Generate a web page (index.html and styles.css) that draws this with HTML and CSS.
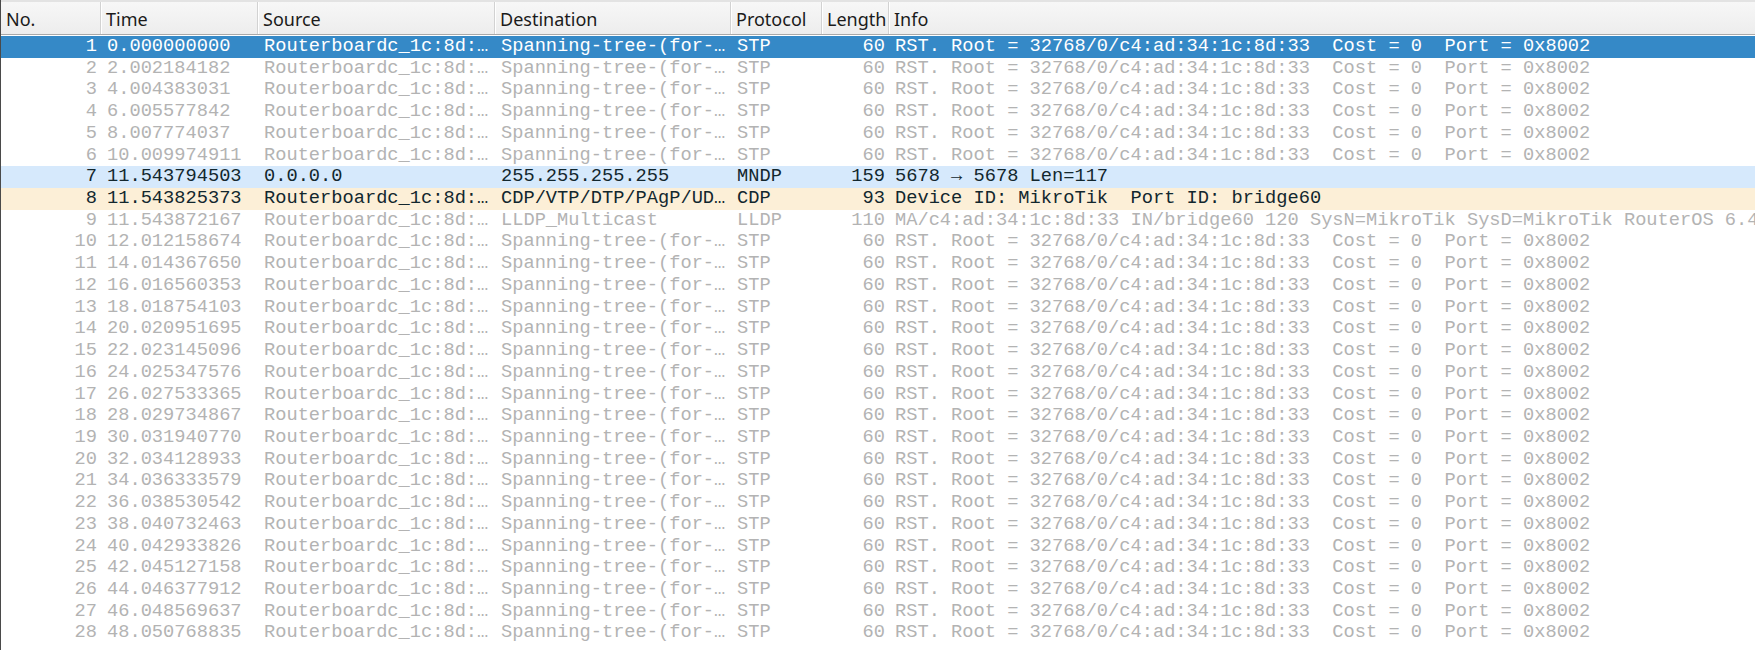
FILE: index.html
```html
<!DOCTYPE html>
<html>
<head>
<meta charset="utf-8">
<link rel="stylesheet" href="styles.css">
</head>
<body>
<div class="list">
  <div class="head">
    <div class="hc">No.</div>
    <div class="hc">Time</div>
    <div class="hc">Source</div>
    <div class="hc">Destination</div>
    <div class="hc">Protocol</div>
    <div class="hc">Length</div>
    <div class="hc last">Info</div>
  </div>
  <div class="body">
    <div class="row sel"><span class="no">1</span><span>0.000000000</span><span>Routerboardc_1c:8d:…</span><span>Spanning-tree-(for-…</span><span>STP</span><span class="len">60</span><span>RST. Root = 32768/0/c4:ad:34:1c:8d:33  Cost = 0  Port = 0x8002</span></div>
    <div class="row dim"><span class="no">2</span><span>2.002184182</span><span>Routerboardc_1c:8d:…</span><span>Spanning-tree-(for-…</span><span>STP</span><span class="len">60</span><span>RST. Root = 32768/0/c4:ad:34:1c:8d:33  Cost = 0  Port = 0x8002</span></div>
    <div class="row dim"><span class="no">3</span><span>4.004383031</span><span>Routerboardc_1c:8d:…</span><span>Spanning-tree-(for-…</span><span>STP</span><span class="len">60</span><span>RST. Root = 32768/0/c4:ad:34:1c:8d:33  Cost = 0  Port = 0x8002</span></div>
    <div class="row dim"><span class="no">4</span><span>6.005577842</span><span>Routerboardc_1c:8d:…</span><span>Spanning-tree-(for-…</span><span>STP</span><span class="len">60</span><span>RST. Root = 32768/0/c4:ad:34:1c:8d:33  Cost = 0  Port = 0x8002</span></div>
    <div class="row dim"><span class="no">5</span><span>8.007774037</span><span>Routerboardc_1c:8d:…</span><span>Spanning-tree-(for-…</span><span>STP</span><span class="len">60</span><span>RST. Root = 32768/0/c4:ad:34:1c:8d:33  Cost = 0  Port = 0x8002</span></div>
    <div class="row dim"><span class="no">6</span><span>10.009974911</span><span>Routerboardc_1c:8d:…</span><span>Spanning-tree-(for-…</span><span>STP</span><span class="len">60</span><span>RST. Root = 32768/0/c4:ad:34:1c:8d:33  Cost = 0  Port = 0x8002</span></div>
    <div class="row udp"><span class="no">7</span><span>11.543794503</span><span>0.0.0.0</span><span>255.255.255.255</span><span>MNDP</span><span class="len">159</span><span>5678 → 5678 Len=117</span></div>
    <div class="row cdp"><span class="no">8</span><span>11.543825373</span><span>Routerboardc_1c:8d:…</span><span>CDP/VTP/DTP/PAgP/UD…</span><span>CDP</span><span class="len">93</span><span>Device ID: MikroTik  Port ID: bridge60</span></div>
    <div class="row dim"><span class="no">9</span><span>11.543872167</span><span>Routerboardc_1c:8d:…</span><span>LLDP_Multicast</span><span>LLDP</span><span class="len">110</span><span>MA/c4:ad:34:1c:8d:33 IN/bridge60 120 SysN=MikroTik SysD=MikroTik RouterOS 6.48.6 (long-term) RB951Ui-2HnD</span></div>
    <div class="row dim"><span class="no">10</span><span>12.012158674</span><span>Routerboardc_1c:8d:…</span><span>Spanning-tree-(for-…</span><span>STP</span><span class="len">60</span><span>RST. Root = 32768/0/c4:ad:34:1c:8d:33  Cost = 0  Port = 0x8002</span></div>
    <div class="row dim"><span class="no">11</span><span>14.014367650</span><span>Routerboardc_1c:8d:…</span><span>Spanning-tree-(for-…</span><span>STP</span><span class="len">60</span><span>RST. Root = 32768/0/c4:ad:34:1c:8d:33  Cost = 0  Port = 0x8002</span></div>
    <div class="row dim"><span class="no">12</span><span>16.016560353</span><span>Routerboardc_1c:8d:…</span><span>Spanning-tree-(for-…</span><span>STP</span><span class="len">60</span><span>RST. Root = 32768/0/c4:ad:34:1c:8d:33  Cost = 0  Port = 0x8002</span></div>
    <div class="row dim"><span class="no">13</span><span>18.018754103</span><span>Routerboardc_1c:8d:…</span><span>Spanning-tree-(for-…</span><span>STP</span><span class="len">60</span><span>RST. Root = 32768/0/c4:ad:34:1c:8d:33  Cost = 0  Port = 0x8002</span></div>
    <div class="row dim"><span class="no">14</span><span>20.020951695</span><span>Routerboardc_1c:8d:…</span><span>Spanning-tree-(for-…</span><span>STP</span><span class="len">60</span><span>RST. Root = 32768/0/c4:ad:34:1c:8d:33  Cost = 0  Port = 0x8002</span></div>
    <div class="row dim"><span class="no">15</span><span>22.023145096</span><span>Routerboardc_1c:8d:…</span><span>Spanning-tree-(for-…</span><span>STP</span><span class="len">60</span><span>RST. Root = 32768/0/c4:ad:34:1c:8d:33  Cost = 0  Port = 0x8002</span></div>
    <div class="row dim"><span class="no">16</span><span>24.025347576</span><span>Routerboardc_1c:8d:…</span><span>Spanning-tree-(for-…</span><span>STP</span><span class="len">60</span><span>RST. Root = 32768/0/c4:ad:34:1c:8d:33  Cost = 0  Port = 0x8002</span></div>
    <div class="row dim"><span class="no">17</span><span>26.027533365</span><span>Routerboardc_1c:8d:…</span><span>Spanning-tree-(for-…</span><span>STP</span><span class="len">60</span><span>RST. Root = 32768/0/c4:ad:34:1c:8d:33  Cost = 0  Port = 0x8002</span></div>
    <div class="row dim"><span class="no">18</span><span>28.029734867</span><span>Routerboardc_1c:8d:…</span><span>Spanning-tree-(for-…</span><span>STP</span><span class="len">60</span><span>RST. Root = 32768/0/c4:ad:34:1c:8d:33  Cost = 0  Port = 0x8002</span></div>
    <div class="row dim"><span class="no">19</span><span>30.031940770</span><span>Routerboardc_1c:8d:…</span><span>Spanning-tree-(for-…</span><span>STP</span><span class="len">60</span><span>RST. Root = 32768/0/c4:ad:34:1c:8d:33  Cost = 0  Port = 0x8002</span></div>
    <div class="row dim"><span class="no">20</span><span>32.034128933</span><span>Routerboardc_1c:8d:…</span><span>Spanning-tree-(for-…</span><span>STP</span><span class="len">60</span><span>RST. Root = 32768/0/c4:ad:34:1c:8d:33  Cost = 0  Port = 0x8002</span></div>
    <div class="row dim"><span class="no">21</span><span>34.036333579</span><span>Routerboardc_1c:8d:…</span><span>Spanning-tree-(for-…</span><span>STP</span><span class="len">60</span><span>RST. Root = 32768/0/c4:ad:34:1c:8d:33  Cost = 0  Port = 0x8002</span></div>
    <div class="row dim"><span class="no">22</span><span>36.038530542</span><span>Routerboardc_1c:8d:…</span><span>Spanning-tree-(for-…</span><span>STP</span><span class="len">60</span><span>RST. Root = 32768/0/c4:ad:34:1c:8d:33  Cost = 0  Port = 0x8002</span></div>
    <div class="row dim"><span class="no">23</span><span>38.040732463</span><span>Routerboardc_1c:8d:…</span><span>Spanning-tree-(for-…</span><span>STP</span><span class="len">60</span><span>RST. Root = 32768/0/c4:ad:34:1c:8d:33  Cost = 0  Port = 0x8002</span></div>
    <div class="row dim"><span class="no">24</span><span>40.042933826</span><span>Routerboardc_1c:8d:…</span><span>Spanning-tree-(for-…</span><span>STP</span><span class="len">60</span><span>RST. Root = 32768/0/c4:ad:34:1c:8d:33  Cost = 0  Port = 0x8002</span></div>
    <div class="row dim"><span class="no">25</span><span>42.045127158</span><span>Routerboardc_1c:8d:…</span><span>Spanning-tree-(for-…</span><span>STP</span><span class="len">60</span><span>RST. Root = 32768/0/c4:ad:34:1c:8d:33  Cost = 0  Port = 0x8002</span></div>
    <div class="row dim"><span class="no">26</span><span>44.046377912</span><span>Routerboardc_1c:8d:…</span><span>Spanning-tree-(for-…</span><span>STP</span><span class="len">60</span><span>RST. Root = 32768/0/c4:ad:34:1c:8d:33  Cost = 0  Port = 0x8002</span></div>
    <div class="row dim"><span class="no">27</span><span>46.048569637</span><span>Routerboardc_1c:8d:…</span><span>Spanning-tree-(for-…</span><span>STP</span><span class="len">60</span><span>RST. Root = 32768/0/c4:ad:34:1c:8d:33  Cost = 0  Port = 0x8002</span></div>
    <div class="row dim"><span class="no">28</span><span>48.050768835</span><span>Routerboardc_1c:8d:…</span><span>Spanning-tree-(for-…</span><span>STP</span><span class="len">60</span><span>RST. Root = 32768/0/c4:ad:34:1c:8d:33  Cost = 0  Port = 0x8002</span></div>
  </div>
</div>
</body>
</html>
```
FILE: styles.css
```css
html, body {
  margin: 0;
  padding: 0;
  background: #ffffff;
  overflow: hidden;
}

.list {
  width: 1755px;
  height: 650px;
  overflow: hidden;
  border-left: 1px solid #4a4a4a;
  box-sizing: border-box;
}

.head,
.row {
  display: grid;
  grid-template-columns: 100px 157px 237px 236px 91px 67px 1fr;
}

.head {
  height: 35px;
  border-top: 2px solid #e3e3e3;
  border-bottom: 1px solid #a9a9a9;
  background: linear-gradient(#f7f7f7, #ededed);
  font-family: "Noto Sans", sans-serif;
  font-size: 18px;
  color: #1b1b1b;
  box-sizing: border-box;
}

.hc {
  padding-left: 5px;
  line-height: 34px;
  height: 32px;
  border-right: 1px solid #d2d2d2;
  box-shadow: 1px 0 0 #ffffff;
  white-space: nowrap;
  overflow: hidden;
}

.hc.last {
  border-right: none;
  box-shadow: none;
}

.body {
  padding-top: 1px;
}

.row {
  height: 21.72px;
  line-height: 21.72px;
  font-family: "Liberation Mono", monospace;
  font-size: 18.7px;
  color: #12272e;
  white-space: pre;
}

.row span {
  padding-left: 6px;
  overflow: hidden;
}

.row span.no,
.row span.len {
  text-align: right;
  padding-left: 0;
  padding-right: 4px;
}

.row.sel {
  background: #3589c7;
  color: #ffffff;
}

.row.dim {
  color: #b3b3b3;
}

.row.udp {
  background: #d6e9fc;
}

.row.cdp {
  background: #fcefd7;
}
```
